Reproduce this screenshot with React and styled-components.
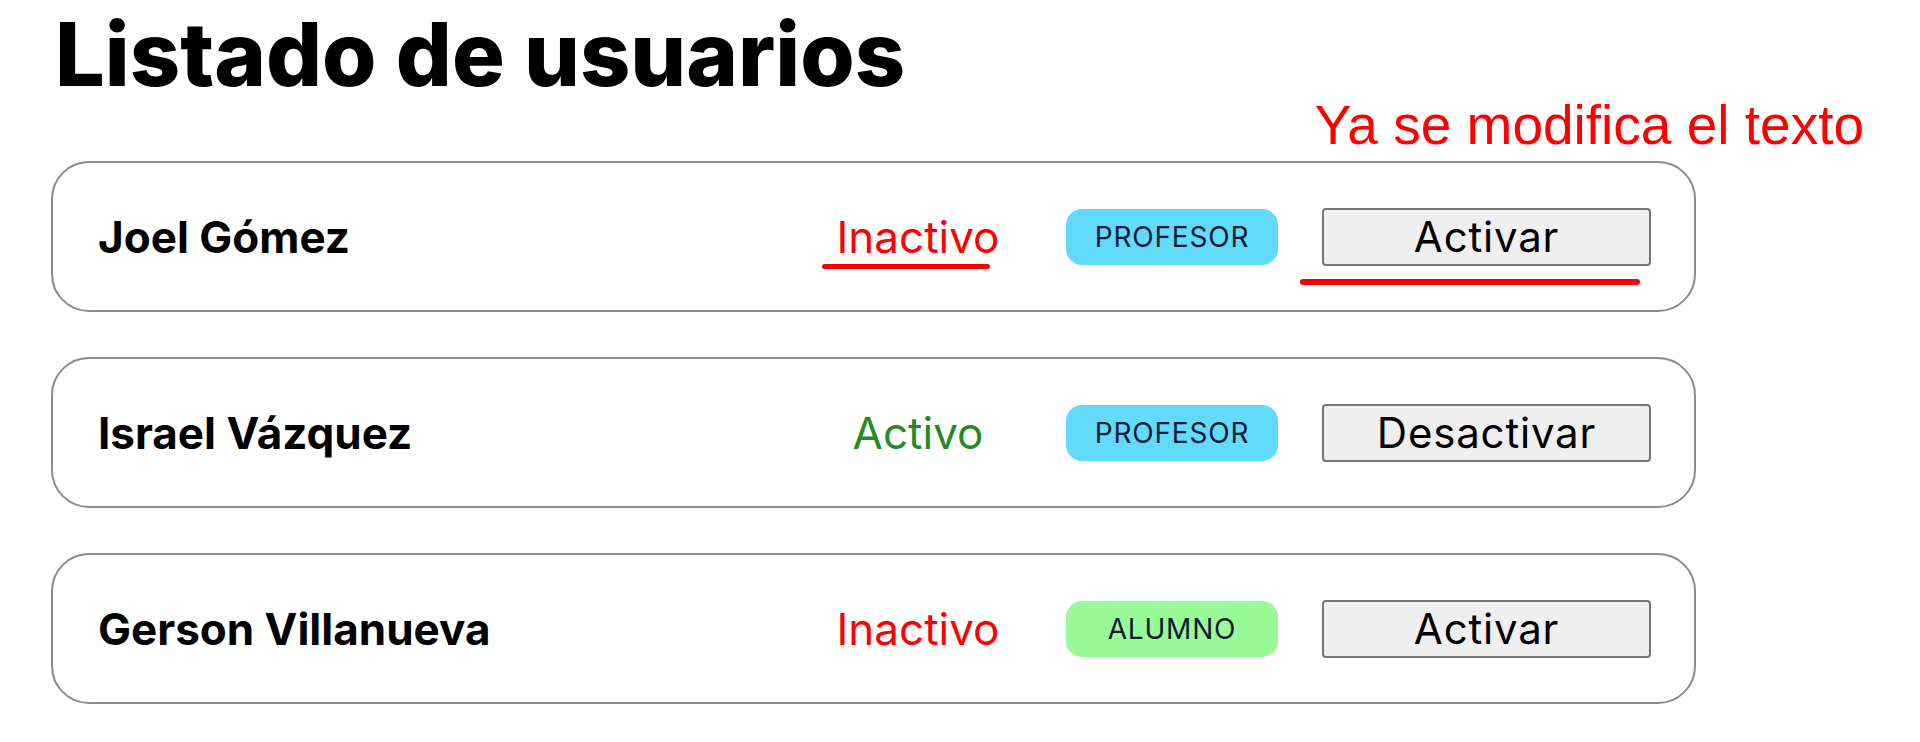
import React from "react";
import styled, { createGlobalStyle } from "styled-components";

const GlobalStyle = createGlobalStyle`
  html, body {
    margin: 0;
    padding: 0;
    background: #ffffff;
  }
  body {
    font-family: "Inter", "Liberation Sans", sans-serif;
    color: #000;
  }
`;

const Page = styled.main`
  padding: 0 0 0 51px;
`;

const Title = styled.h1`
  margin: 10px 0 0 4px;
  font-size: 88px;
  line-height: 88px;
  font-weight: 800;
  letter-spacing: 0;
`;

const Note = styled.p`
  margin: 0;
  width: 1813px;
  text-align: right;
  font-family: "Liberation Sans", Arial, sans-serif;
  font-size: 55px;
  line-height: 54px;
  color: #ff0000;
`;

const List = styled.ul`
  list-style: none;
  margin: 9px 0 0 0;
  padding: 0;
  width: 1645px;
  display: flex;
  flex-direction: column;
  gap: 45px;
`;

const Card = styled.li`
  box-sizing: border-box;
  height: 151px;
  border: 2px solid #8c8c8c;
  border-radius: 38px;
  padding: 0 43px 0 45px;
  display: flex;
  align-items: center;
  gap: 44px;
`;

const Name = styled.span`
  flex: 1;
  font-size: 44px;
  font-weight: 700;
`;

const Status = styled.span`
  position: relative;
  width: 208px;
  text-align: center;
  font-size: 44px;
  font-weight: 400;
  color: ${(p) => (p.$active ? "#228b22" : "#ff0000")};
`;

const Badge = styled.span`
  width: 212px;
  height: 56px;
  border-radius: 16px;
  display: flex;
  align-items: center;
  justify-content: center;
  background: ${(p) => (p.$role === "ALUMNO" ? "#98fb98" : "#61dafb")};
  color: #101c33;
  font-size: 28px;
  letter-spacing: 0.8px;
`;

const ActionCell = styled.div`
  position: relative;
`;

const Button = styled.button`
  box-sizing: border-box;
  width: 329px;
  height: 58px;
  border: 2px solid #767676;
  border-radius: 4px;
  background: #efefef;
  font-family: "Inter", "Liberation Sans", sans-serif;
  font-size: 42px;
  color: #000;
  letter-spacing: 0.8px;
  padding: 0;
  display: block;
`;

/* red marker strokes drawn over the screenshot */
const Scribble = styled.span`
  position: absolute;
  left: ${(p) => p.$left}px;
  top: ${(p) => p.$top}px;
  width: ${(p) => p.$width}px;
  height: ${(p) => p.$h}px;
  border-radius: 4px;
  background: #ff0000;
`;

const users = [
  { name: "Joel Gómez", active: false, role: "PROFESOR", marked: true },
  { name: "Israel Vázquez", active: true, role: "PROFESOR" },
  { name: "Gerson Villanueva", active: false, role: "ALUMNO" },
];

export default function App() {
  return (
    <Page>
      <GlobalStyle />
      <Title>Listado de usuarios</Title>
      <Note>Ya se modifica el texto</Note>
      <List>
        {users.map((u) => (
          <Card key={u.name}>
            <Name>{u.name}</Name>
            <Status $active={u.active}>
              {u.active ? "Activo" : "Inactivo"}
              {u.marked && <Scribble $left={8} $top={54} $width={168} $h={5} />}
            </Status>
            <Badge $role={u.role}>{u.role}</Badge>
            <ActionCell>
              <Button>{u.active ? "Desactivar" : "Activar"}</Button>
              {u.marked && <Scribble $left={-22} $top={71} $width={340} $h={6} />}
            </ActionCell>
          </Card>
        ))}
      </List>
    </Page>
  );
}
